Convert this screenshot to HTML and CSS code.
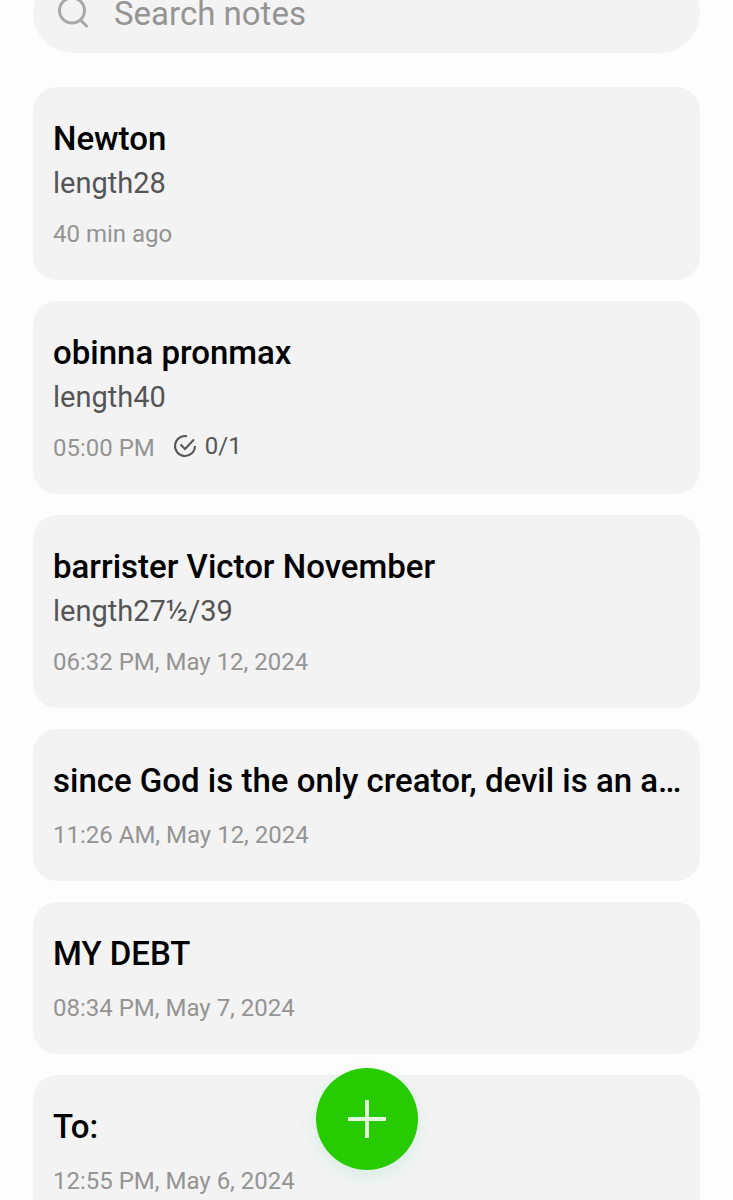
FILE: index.html
```
<!DOCTYPE html>
<html lang="en">
<head>
    <meta charset="UTF-8">
    <meta name="viewport" content="width=device-width, initial-scale=1.0">
    <title>Notes</title>
    <link rel="stylesheet" href="styles.css">
</head>
<body>
    <div class="container">
        <label class="search">
            <svg class="search-icon" viewBox="0 0 34 34" aria-hidden="true">
                <circle cx="15" cy="13.500" r="12.500"/>
                <path d="M23.500 23l7 7"/>
            </svg>
            <input type="search" placeholder="Search notes" aria-label="Search notes">
        </label>

        <main class="notes">
            <article class="note">
                <h2>Newton</h2>
                <p>length28</p>
                <div class="meta"><time>40 min ago</time></div>
            </article>
            <article class="note">
                <h2>obinna pronmax</h2>
                <p>length40</p>
                <div class="meta">
                    <time>05:00 PM</time>
                    <span class="tasks">
                        <svg class="check-icon" viewBox="0 0 24 24" aria-hidden="true">
                            <path d="M14 2.200A10 10 0 1 0 22 12"/>
                            <path d="M7.500 10.500l4.500 4.500L21 5.500"/>
                        </svg>
                        0/1
                    </span>
                </div>
            </article>
            <article class="note">
                <h2>barrister Victor November</h2>
                <p>length27½/39</p>
                <div class="meta"><time>06:32 PM, May 12, 2024</time></div>
            </article>
            <article class="note">
                <h2>since God is the only creator, devil is an a…</h2>
                <div class="meta"><time>11:26 AM, May 12, 2024</time></div>
            </article>
            <article class="note">
                <h2>MY DEBT</h2>
                <div class="meta"><time>08:34 PM, May 7, 2024</time></div>
            </article>
            <article class="note">
                <h2>To:</h2>
                <div class="meta"><time>12:55 PM, May 6, 2024</time></div>
            </article>
        </main>
    </div>

    <button class="add" type="button" aria-label="Add note">
        <svg viewBox="0 0 40 40" aria-hidden="true">
            <path d="M20 1v38M1 20h38"/>
        </svg>
    </button>
</body>
</html>
```
FILE: styles.css
```
* {
    box-sizing: border-box;
}
body {
    font-family: Roboto, sans-serif;
    background-color: #fdfdfd;
    color: #000;
    margin: 0;
    height: 100vh;
    overflow: hidden;
}
.container {
    padding: 0 33px;
}
.search {
    display: flex;
    align-items: center;
    gap: 23px;
    height: 80px;
    margin-top: -27px;
    padding: 2px 24px 0;
    border-radius: 40px;
    background: #f3f3f3;
}
.search-icon {
    flex: none;
    width: 34px;
    height: 34px;
    fill: none;
    stroke: #a8a8a8;
    stroke-width: 3;
}
.search input {
    flex: 1;
    min-width: 0;
    padding: 0;
    border: 0;
    outline: 0;
    background: none;
    font: 33px/40px Roboto, sans-serif;
    color: #000;
}
.search input::placeholder {
    color: #949494;
    opacity: 1;
}
.notes {
    display: flex;
    flex-direction: column;
    gap: 21px;
    margin-top: 34px;
}
.note {
    padding: 32px 16px 30px 20px;
    border-radius: 24px;
    background: #f3f3f3;
}
.note h2 {
    margin: 0;
    overflow: hidden;
    white-space: nowrap;
    text-overflow: ellipsis;
    font-size: 33px;
    line-height: 40px;
    font-weight: 500;
}
.note p {
    margin: 4px 0 0;
    font-size: 29px;
    line-height: 40px;
    color: #555;
}
.meta {
    display: flex;
    align-items: flex-start;
    gap: 18px;
    margin-top: 18px;
    font-size: 24px;
    line-height: 32px;
    color: #949494;
}
.note p + .meta {
    margin-top: 15px;
}
.tasks {
    display: flex;
    align-items: center;
    gap: 8px;
    line-height: 28px;
    color: #555;
}
.check-icon {
    width: 24px;
    height: 24px;
    fill: none;
    stroke: currentColor;
    stroke-width: 2;
}
.add {
    position: fixed;
    left: 50%;
    bottom: 30px;
    display: flex;
    align-items: center;
    justify-content: center;
    width: 102px;
    height: 102px;
    margin-left: -51px;
    padding: 0;
    border: 0;
    border-radius: 50%;
    background: #27cc00;
    box-shadow: 0 6px 18px rgba(0, 204, 120, 0.12);
    cursor: pointer;
}
.add svg {
    width: 40px;
    height: 40px;
    fill: none;
    stroke: #e4fadf;
    stroke-width: 4;
}
```
